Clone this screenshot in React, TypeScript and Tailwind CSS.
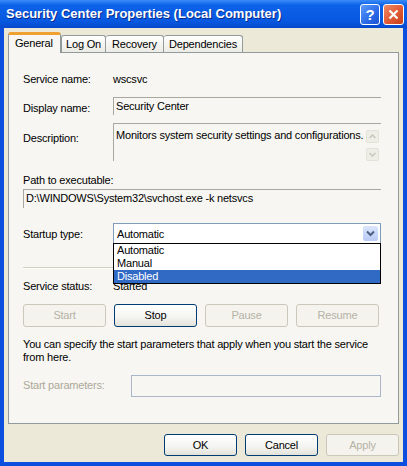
import React from "react";

const ui = "font-['Liberation_Sans',Arial,sans-serif] text-[11px] tracking-[-0.2px] text-black";

function XpButton({ label, disabled, w }: { label: string; disabled?: boolean; w: string }) {
  return (
    <div
      className={
        disabled
          ? `${w} h-full rounded-[3px] border border-[#cbc8bb] bg-[#f4f3ee] text-[#b4b2a5] flex items-center justify-center`
          : `${w} h-full rounded-[3px] border border-[#003c74] bg-[linear-gradient(180deg,#ffffff_0%,#f4f4f0_60%,#e3e2da_100%)] flex items-center justify-center`
      }
    >
      {label}
    </div>
  );
}

function Chevron({ color }: { color: string }) {
  return (
    <svg width="9" height="7" viewBox="0 0 9 7">
      <path d="M1 1.5 L4.5 5 L8 1.5" fill="none" stroke={color} strokeWidth="2" />
    </svg>
  );
}

export default function App() {
  return (
    <div className={`w-[407px] h-[466px] flex flex-col bg-[#0a4fde] ${ui}`}>
      {/* title bar */}
      <div className="h-[28px] flex items-center pl-[6px] pr-[3px] bg-[linear-gradient(180deg,#3b8cf7_0%,#0b62e8_18%,#0858e1_75%,#0549cc_100%)]">
        <span className="flex-1 text-white font-bold text-[13px] tracking-normal [text-shadow:1px_1px_#0b2a8a] whitespace-nowrap">
          Security Center Properties (Local Computer)
        </span>
        <div className="flex gap-[3px]">
          <div className="w-[20px] h-[21px] rounded-[3px] border border-white bg-[linear-gradient(135deg,#5f9cf9_0%,#2a6ae8_60%,#1d52d0_100%)] text-white font-bold text-[15px] leading-[19px] text-center">
            ?
          </div>
          <div className="w-[21px] h-[21px] rounded-[3px] border border-white bg-[linear-gradient(135deg,#ee8a68_0%,#df5a33_55%,#c8401c_100%)] flex items-center justify-center">
            <svg width="11" height="11" viewBox="0 0 11 11">
              <path d="M1.5 1.5 L9.5 9.5 M9.5 1.5 L1.5 9.5" stroke="white" strokeWidth="2.2" />
            </svg>
          </div>
        </div>
      </div>

      {/* body */}
      <div className="flex-1 mx-[4px] mb-[4px] bg-[#ece9d8] flex flex-col">
        {/* tabs */}
        <div className="mt-[4px] ml-[4px] h-[20px] flex items-end">
          <div className="relative z-10 mb-[-1px] w-[53px] h-[21px] rounded-t-[3px] border border-b-0 border-[#919b9c] border-t-[3px] border-t-[#f0a030] bg-[#f7f6f2] pl-[6px] pt-[1px] leading-[14px]">
            General
          </div>
          <div className="w-[45px] h-[17px] rounded-t-[3px] border border-b-0 border-[#919b9c] bg-[linear-gradient(180deg,#ffffff,#ecebe5)] text-center leading-[16px]">
            Log On
          </div>
          <div className="w-[58px] h-[17px] rounded-t-[3px] border border-b-0 border-l-0 border-[#919b9c] bg-[linear-gradient(180deg,#ffffff,#ecebe5)] text-center leading-[16px]">
            Recovery
          </div>
          <div className="w-[79px] h-[17px] rounded-t-[3px] border border-b-0 border-l-0 border-[#919b9c] bg-[linear-gradient(180deg,#ffffff,#ecebe5)] text-center leading-[16px]">
            Dependencies
          </div>
        </div>

        {/* panel */}
        <div className="ml-[4px] w-[391px] h-[372px] border border-[#919b9c] bg-[#f7f6f2] pl-[14px] pr-[17px] flex flex-col">
          <div className="mt-[19px] h-[14px] leading-[14px] flex">
            <span className="w-[90px] shrink-0">Service name:</span>
            <span>wscsvc</span>
          </div>

          <div className="mt-[11px] flex items-start">
            <span className="w-[90px] shrink-0 pt-[4px] leading-[14px]">Display name:</span>
            <div className="flex-1 h-[18px] border-t border-l border-t-[#a9a89e] border-l-[#a9a89e] pl-[2px] pt-[1px] leading-[14px]">
              Security Center
            </div>
          </div>

          <div className="mt-[8px] flex items-start">
            <span className="w-[90px] shrink-0 pt-[8px] leading-[14px]">Description:</span>
            <div className="flex-1 min-w-0 h-[38px] border-t border-l border-t-[#a9a89e] border-l-[#a9a89e] pl-[2px] flex">
              <span className="flex-1 min-w-0 pt-[4px] leading-[14px] whitespace-nowrap">
                Monitors system security settings and configurations.
              </span>
              <div className="w-[13px] shrink-0 mt-[6px] mr-[2px] flex flex-col gap-[5px]">
                <div className="h-[13px] rounded-[2px] bg-[#eeede6] border border-[#e3e2d8] flex items-center justify-center">
                  <svg width="7" height="5" viewBox="0 0 7 5">
                    <path d="M0.5 4 L3.5 1 L6.5 4" fill="none" stroke="#c8c7bd" strokeWidth="1.5" />
                  </svg>
                </div>
                <div className="h-[13px] rounded-[2px] bg-[#eeede6] border border-[#e3e2d8] flex items-center justify-center">
                  <svg width="7" height="5" viewBox="0 0 7 5">
                    <path d="M0.5 1 L3.5 4 L6.5 1" fill="none" stroke="#c8c7bd" strokeWidth="1.5" />
                  </svg>
                </div>
              </div>
            </div>
          </div>

          <div className="mt-[12px] h-[14px] leading-[14px]">Path to executable:</div>
          <div className="mt-[2px] h-[19px] border-t border-l border-t-[#a9a89e] border-l-[#a9a89e] pl-[2px] pt-[1px] leading-[14px]">
            D:\WINDOWS\System32\svchost.exe -k netsvcs
          </div>

          <div className="mt-[15px] flex items-start">
            <span className="w-[90px] shrink-0 pt-[4px] leading-[14px]">Startup type:</span>
            <div className="relative flex-1 h-[21px] border border-[#7f9db9] bg-white flex items-center">
              <span className="flex-1 pl-[3px] leading-[14px]">Automatic</span>
              <div className="w-[15px] h-[15px] mr-[2px] rounded-[2px] bg-[linear-gradient(180deg,#dbe5fb,#b9cbf5)] flex items-center justify-center">
                <Chevron color="#4d6185" />
              </div>
              {/* open list */}
              <div className="absolute z-20 left-[-1px] right-[-1px] top-full border border-black bg-white">
                <div className="h-[13px] leading-[13px] pl-[3px]">Automatic</div>
                <div className="h-[13px] leading-[13px] pl-[3px]">Manual</div>
                <div className="h-[13px] leading-[13px] pl-[3px] bg-[#316ac5] text-white">Disabled</div>
              </div>
            </div>
          </div>

          <div className="mt-[23px] h-[2px] border-t border-b border-t-[#d0d0bf] border-b-white" />

          <div className="mt-[10px] h-[14px] leading-[14px] flex">
            <span className="w-[90px] shrink-0">Service status:</span>
            <span>Started</span>
          </div>

          <div className="mt-[11px] h-[23px] flex gap-[8px]">
            <XpButton label="Start" disabled w="w-[83px]" />
            <XpButton label="Stop" w="w-[83px]" />
            <XpButton label="Pause" disabled w="w-[83px]" />
            <XpButton label="Resume" disabled w="w-[83px]" />
          </div>

          <p className="mt-[11px] mr-[-10px] leading-[13px]">
            You can specify the start parameters that apply when you start the service from here.
          </p>

          <div className="mt-[11px] flex items-start">
            <span className="w-[108px] shrink-0 pt-[3px] leading-[14px] text-[#aca899]">Start parameters:</span>
            <div className="flex-1 h-[22px] border border-[#a9b8c9] bg-[#f7f6f2]" />
          </div>
        </div>

        {/* dialog buttons */}
        <div className="mt-[10px] h-[22px] pr-[4px] flex justify-end gap-[8px]">
          <XpButton label="OK" w="w-[73px]" />
          <XpButton label="Cancel" w="w-[73px]" />
          <XpButton label="Apply" disabled w="w-[73px]" />
        </div>
      </div>
    </div>
  );
}
